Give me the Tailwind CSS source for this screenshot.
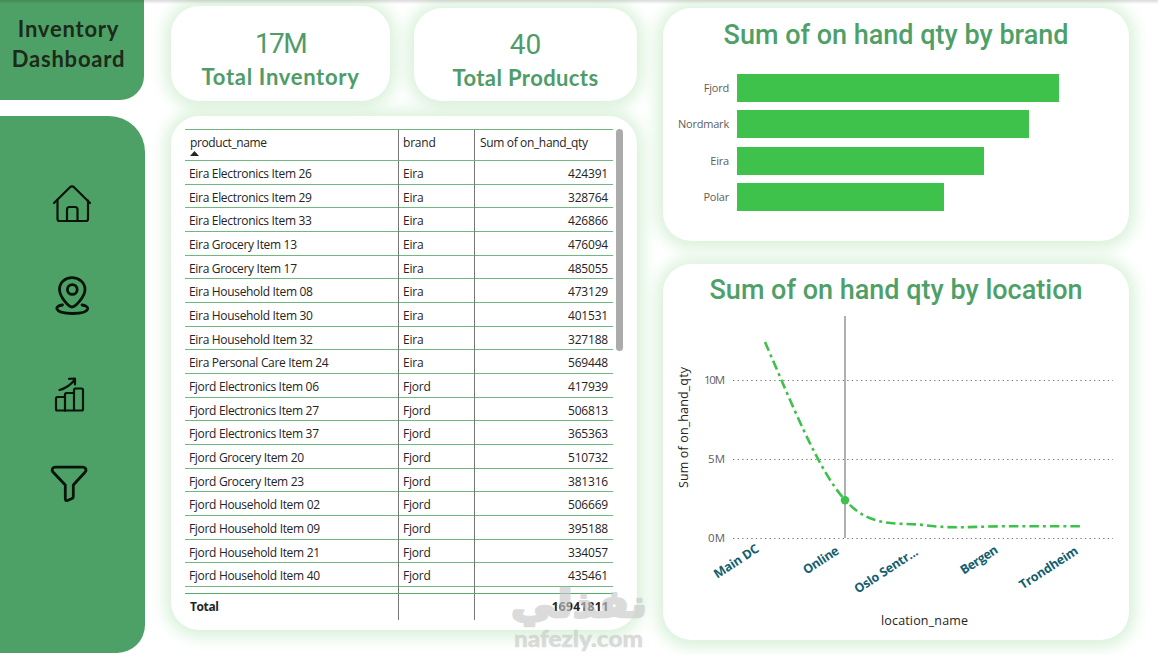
<!DOCTYPE html>
<html lang="en">
  <head>
    <meta charset="UTF-8" />
    <meta name="viewport" content="width=device-width, initial-scale=1.0" />
    <title>Inventory Dashboard</title>
    <script src="https://cdn.jsdelivr.net/npm/@tailwindcss/browser@4"></script>
  </head>
  <body class="bg-white h-screen overflow-hidden font-['Open_Sans','Noto_Sans',sans-serif] text-[#252423]">
    <div class="relative flex w-[1158px] h-[654px] overflow-hidden">
      <!-- Sidebar -->
      <aside class="w-[145px] mr-[26px] pb-px flex flex-col gap-4 shrink-0">
        <h1 class="w-[144px] h-[100px] pt-[14px] pr-[7px] bg-[#4ea166] rounded-br-[24px] text-center font-['Comic_Sans_MS','Lato',sans-serif] font-bold text-[22px] leading-[30px] tracking-[0.8px] text-[#1c2a1a]">
          Inventory<br />Dashboard
        </h1>
        <nav class="flex-1 bg-[#4ea166] rounded-tr-[36px] rounded-br-[28px] flex flex-col pl-[50px] pt-[66px] gap-12">
          <a>
            <svg class="size-11" viewBox="0 0 44 44" fill="none" stroke="#06140a" stroke-width="2.200" stroke-linecap="round" stroke-linejoin="round">
              <path d="M4 21 L20 5.200 Q22 3.500 24 5.200 L40 21" />
              <path d="M7.500 18.500 V37 Q7.500 39 9.500 39 H36 Q38 39 38 37 V18.500" />
              <path d="M17 39 V27.500 Q17 25 19.500 25 H25 Q27.500 25 27.500 27.500 V39" />
            </svg>
          </a>
          <a>
            <svg class="size-11" viewBox="0 0 44 44" fill="none" stroke="#06140a" stroke-width="2.800" stroke-linecap="round" stroke-linejoin="round">
              <path d="M22 33 C19 33 9.500 23 9.500 15.500 C9.500 8.500 15 3.700 22 3.700 C29 3.700 35 8.500 35 15.500 C35 23 25 33 22 33 Z" />
              <circle cx="22.300" cy="15.500" r="4.900" />
              <path d="M12.500 31 C8.500 31.500 6.500 33 6.800 34.800 C8 38 15 39.500 22.500 39.500 C30 39.500 37 38 37.700 34.800 C38 33 35.500 31.500 32 31" />
            </svg>
          </a>
          <a class="mt-2">
            <svg class="size-11" viewBox="0 0 44 44" fill="none" stroke="#06140a" stroke-width="2.200" stroke-linecap="round" stroke-linejoin="round">
              <path d="M15 36.500 H7.500 Q6 36.500 6 35 V24.500 Q6 23 7.500 23 H15" />
              <path d="M15 36.500 V20.500 Q15 19 16.500 19 H23.500" />
              <path d="M15 36.500 H31.500 Q33 36.500 33 35 V16 Q33 14.500 31.500 14.500 H25.500 Q24 14.500 24 16 V36.500" />
              <path d="M9.500 16 C15.500 14.500 20.500 11 24.500 6 M19 4.800 L25 4.500 V10.500" />
            </svg>
          </a>
          <a class="-mt-1">
            <svg class="size-11" viewBox="0 0 44 44" fill="none" stroke="#06140a" stroke-width="2.800" stroke-linecap="round" stroke-linejoin="round">
              <path d="M5 5.200 H33 C35.800 5.200 36.800 8 35.200 10 L23.300 23 V34.500 Q23.300 36 22 36.500 L17.500 38.500 Q15.300 39 15.300 36.800 V23 L3 10 C1.300 8 2.300 5.200 5 5.200 Z" />
            </svg>
          </a>
        </nav>
      </aside>

      <!-- KPI cards and product table -->
      <main class="w-[466px] mr-[26px] shrink-0 flex flex-col">
        <section class="h-[116px] flex gap-6">
          <div class="mt-[6px] w-[219px] h-[95px] bg-white rounded-[28px] shadow-[0_1px_16px_6px_#d8f1d9] flex flex-col items-center text-[#4f9c68]">
            <span class="mt-[22px] font-['Roboto',sans-serif] text-[28px] leading-8 tracking-[-1.6px]">17M</span>
            <span class="-mt-px font-['Comic_Sans_MS','Lato',sans-serif] font-bold text-[22px] leading-9 tracking-[0.7px]">Total Inventory</span>
          </div>
          <div class="mt-2 w-[223px] h-[93px] bg-white rounded-[28px] shadow-[0_1px_16px_6px_#d8f1d9] flex flex-col items-center text-[#4f9c68]">
            <span class="mt-[21px] font-['Roboto',sans-serif] text-[28px] leading-8">40</span>
            <span class="-mt-px font-['Comic_Sans_MS','Lato',sans-serif] font-bold text-[22px] leading-9 tracking-[0.4px]">Total Products</span>
          </div>
        </section>

        <section class="h-[514px] bg-white rounded-[28px] shadow-[0_1px_16px_6px_#d8f1d9] flex pt-[13px] pl-[14px]">
          <div class="w-[428px] text-[12px]">
            <div class="grid grid-cols-[213px_76px_139px] h-8 border-y border-[#6fb981]">
              <div class="pl-[5px] pt-[5px] leading-4 tracking-[-0.4px]">
                product_name
                <svg class="w-[9px] h-[5px]" viewBox="0 0 9 5"><path d="M0 5 L4.500 0 L9 5 Z" fill="#252423" /></svg>
              </div>
              <div class="border-l border-[#777] pl-1 pt-[5px] leading-4 tracking-[-0.2px]">brand</div>
              <div class="border-l border-[#777] pl-[5px] pt-[5px] leading-4 tracking-[-0.35px]">Sum of on_hand_qty</div>
            </div>
            <div id="rows"></div>
            <div class="grid grid-cols-[213px_76px_139px] h-[6px]">
              <div></div>
              <div class="border-l border-[#777]"></div>
              <div class="border-l border-[#777]"></div>
            </div>
            <div class="grid grid-cols-[213px_76px_139px] h-[25px] border-t border-[#54ac6c] font-bold leading-[26px]">
              <div class="pl-[5px] tracking-[-0.4px]">Total</div>
              <div class="border-l border-[#777]"></div>
              <div class="border-l border-[#777] pr-1 text-right tracking-[0.3px]">16941811</div>
            </div>
          </div>
          <div class="ml-[3px] w-[7px] h-[222px] rounded-full bg-[#ababab]"></div>
        </section>
      </main>

      <!-- Charts -->
      <section class="w-[466px] pt-2 flex flex-col gap-[23px]">
        <div class="h-[233px] bg-white rounded-[28px] shadow-[0_1px_16px_6px_#d8f1d9]">
          <h2 class="pt-[9px] text-center font-['Roboto',sans-serif] font-medium text-[27px] leading-9 text-[#4f9f68]">Sum of on hand qty by brand</h2>
          <div id="bars" class="mt-[21px] flex flex-col gap-[8.400px] text-[11px] text-[#605e5c]"></div>
        </div>
        <div class="h-[376px] bg-white rounded-[28px] shadow-[0_1px_16px_6px_#d8f1d9]">
          <h2 class="pt-2 text-center font-['Roboto',sans-serif] font-medium text-[27px] leading-9 text-[#4f9f68]">Sum of on hand qty by location</h2>
          <svg class="w-[466px] h-[332px]" viewBox="663 308 466 332">
            <g stroke="#777" stroke-dasharray="1.300 3.270">
              <path d="M733 380.500 H1113" />
              <path d="M733 459.500 H1113" />
              <path d="M733 538.500 H1113" />
            </g>
            <g fill="#605e5c" font-size="11.500" text-anchor="end">
              <text x="725" y="384" textLength="21">10M</text>
              <text x="725" y="463">5M</text>
              <text x="725" y="542">0M</text>
            </g>
            <path d="M845 316 V538" stroke="#b0b0b0" stroke-width="2" />
            <path d="M765 342 C792 404 818 470 845 500 C871 529 898 522 924 525 C950 529 975 526.500 1002 526.300 L1080 526.300" fill="none" stroke="#3cc24b" stroke-width="2.600" stroke-dasharray="9.500 4 3 4" />
            <circle cx="845" cy="500.300" r="4.200" fill="#3cc24b" />
            <g fill="#12606f" font-size="12.500" font-weight="700" text-anchor="end">
              <text transform="translate(760 551) rotate(-33)" textLength="51">Main DC</text>
              <text transform="translate(840 553) rotate(-33)" textLength="40">Online</text>
              <text transform="translate(919 554) rotate(-33)" textLength="73">Oslo Sentr...</text>
              <text transform="translate(999 552) rotate(-33)" textLength="42">Bergen</text>
              <text transform="translate(1079 553) rotate(-33)" textLength="67">Trondheim</text>
            </g>
            <g fill="#252423" font-size="12.500">
              <text transform="translate(688 488) rotate(-90)" textLength="121">Sum of on_hand_qty</text>
              <text x="881" y="625" textLength="87">location_name</text>
            </g>
          </svg>
        </div>
      </section>

      <div class="absolute inset-x-0 top-0 h-1 bg-linear-to-b from-black/15 to-transparent"></div>

      <!-- Watermark -->
      <svg class="absolute left-[505px] top-[578px] w-[150px] h-[76px] opacity-65" viewBox="505 578 150 76" fill="#c8c8c8" stroke="#c8c8c8" stroke-linejoin="round">
        <text x="511" y="617" font-family="DejaVu Sans" font-weight="700" font-size="38" stroke-width="2.500" textLength="136" lengthAdjust="spacingAndGlyphs">نفذلي</text>
        <text x="514" y="647" font-family="Lato" font-weight="900" font-size="22" stroke-width="0.400" textLength="129" lengthAdjust="spacingAndGlyphs">nafezly.com</text>
      </svg>
    </div>

    <script>
      const products = [
        ["Eira Electronics Item 26", "Eira", 424391],
        ["Eira Electronics Item 29", "Eira", 328764],
        ["Eira Electronics Item 33", "Eira", 426866],
        ["Eira Grocery Item 13", "Eira", 476094],
        ["Eira Grocery Item 17", "Eira", 485055],
        ["Eira Household Item 08", "Eira", 473129],
        ["Eira Household Item 30", "Eira", 401531],
        ["Eira Household Item 32", "Eira", 327188],
        ["Eira Personal Care Item 24", "Eira", 569448],
        ["Fjord Electronics Item 06", "Fjord", 417939],
        ["Fjord Electronics Item 27", "Fjord", 506813],
        ["Fjord Electronics Item 37", "Fjord", 365363],
        ["Fjord Grocery Item 20", "Fjord", 510732],
        ["Fjord Grocery Item 23", "Fjord", 381316],
        ["Fjord Household Item 02", "Fjord", 506669],
        ["Fjord Household Item 09", "Fjord", 395188],
        ["Fjord Household Item 21", "Fjord", 334057],
        ["Fjord Household Item 40", "Fjord", 435461],
      ];

      document.getElementById("rows").innerHTML = products
        .map(
          ([name, brand, qty]) => `
        <div class="grid grid-cols-[213px_76px_139px] h-[23.670px] border-b border-[#6fb981] leading-[25px]">
          <div class="pl-1 tracking-[-0.32px]">${name}</div>
          <div class="border-l border-[#777] pl-1 tracking-[-0.2px]">${brand}</div>
          <div class="border-l border-[#777] pr-[5px] text-right tracking-[-0.2px]">${qty}</div>
        </div>`
        )
        .join("");

      const brands = [
        ["Fjord", 322],
        ["Nordmark", 292],
        ["Eira", 247],
        ["Polar", 207],
      ];

      document.getElementById("bars").innerHTML = brands
        .map(
          ([name, width]) => `
        <div class="flex items-center h-7">
          <span class="w-[66px] mr-2 text-right tracking-[-0.2px]">${name}</span>
          <div class="h-7 bg-[#3fc24b]" style="width: ${width}px"></div>
        </div>`
        )
        .join("");
    </script>
  </body>
</html>
